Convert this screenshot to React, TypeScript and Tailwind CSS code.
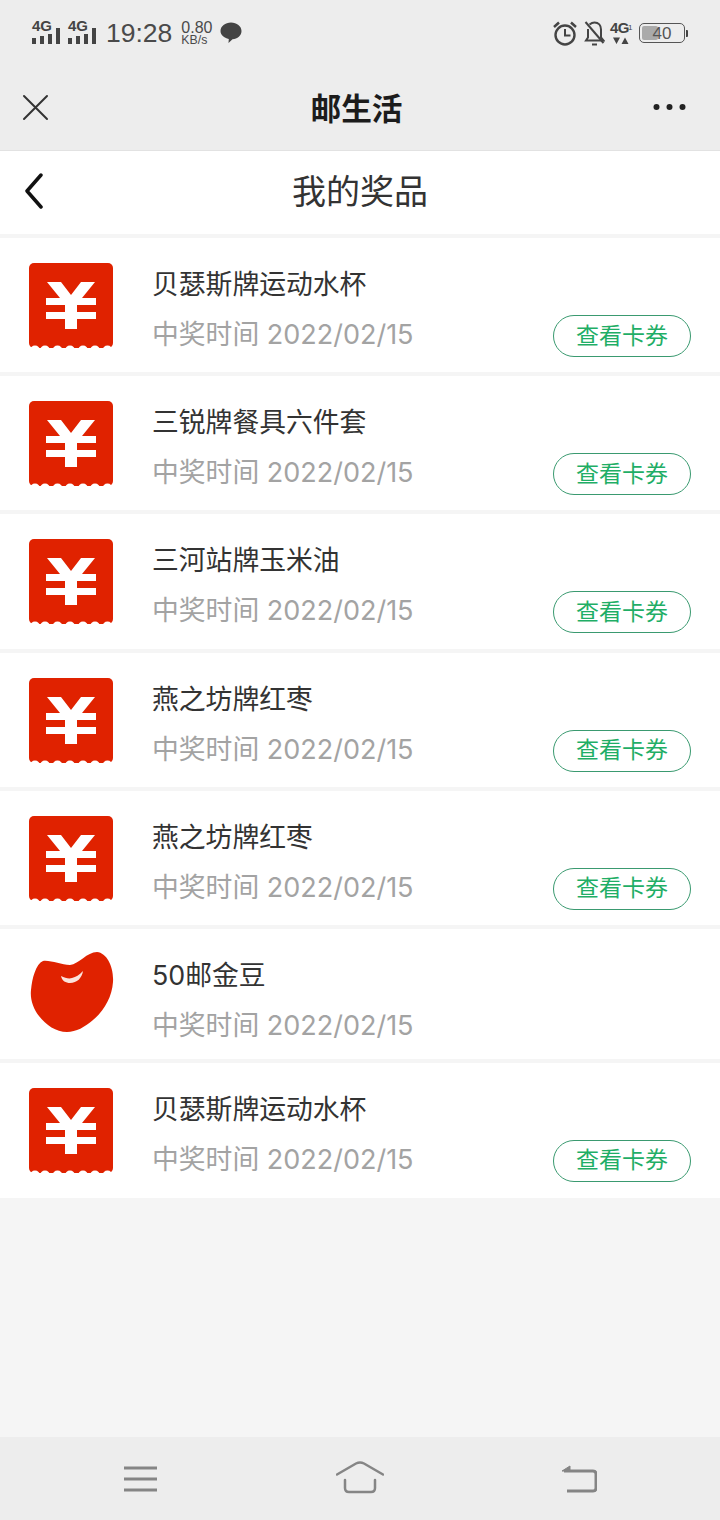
const CJK = "font-['Inter','Noto_Sans_CJK_SC',sans-serif]";

interface Prize {
  name: string;
  icon: 'ticket' | 'bean';
  hasButton: boolean;
  height: string;
}

const PRIZES: Prize[] = [
  { name: '贝瑟斯牌运动水杯', icon: 'ticket', hasButton: true, height: 'h-[134.2px]' },
  { name: '三锐牌餐具六件套', icon: 'ticket', hasButton: true, height: 'h-[134.2px]' },
  { name: '三河站牌玉米油', icon: 'ticket', hasButton: true, height: 'h-[134.2px]' },
  { name: '燕之坊牌红枣', icon: 'ticket', hasButton: true, height: 'h-[134.2px]' },
  { name: '燕之坊牌红枣', icon: 'ticket', hasButton: true, height: 'h-[134.2px]' },
  { name: '50邮金豆', icon: 'bean', hasButton: false, height: 'h-[130px]' },
  { name: '贝瑟斯牌运动水杯', icon: 'ticket', hasButton: true, height: 'h-[135px]' },
];

const SCALLOPS = [6, 16, 28.500, 41, 54, 66, 78.500];

function Signal() {
  return (
    <div className="relative w-[29px] h-[28px]">
      <span className="absolute left-0 top-[1px] text-[15px] leading-[14px] font-bold text-[#444] font-['Liberation_Sans',sans-serif]">4G</span>
      <svg width="29" height="28" viewBox="0 0 29 28" className="absolute left-0 top-0">
        <rect x="0" y="20" width="4" height="6" fill="#444" />
        <rect x="8" y="18" width="4" height="8" fill="#444" />
        <rect x="16" y="16" width="4" height="10" fill="#444" />
        <rect x="24" y="10" width="4" height="16" fill="#444" />
      </svg>
    </div>
  );
}

function StatusBar() {
  return (
    <div className="h-[70px] bg-[#ededed] flex items-start justify-between pl-[32px] pr-[32px] pt-[17px] text-[#444]">
      <div className="flex items-center h-[30px]">
        <div className="flex gap-[7px]">
          <Signal />
          <Signal />
        </div>
        <span className="ml-[9px] text-[26.500px] leading-[30px] mt-[2px] font-['Liberation_Sans',sans-serif] text-[#4a4a4a]">19:28</span>
        <div className="ml-[9px] mt-[2px] flex flex-col items-start text-[#4a4a4a] font-['Liberation_Sans',sans-serif]">
          <span className="text-[16px] leading-[13px]">0.80</span>
          <span className="text-[12.300px] leading-[12px]">KB/s</span>
        </div>
        <svg width="22" height="22" viewBox="0 0 22 22" className="ml-[8px] mt-[2px]">
          <path d="M11 .5c5.700 0 10.500 3.600 10.500 8.500 0 4.500-4 8-9 8.300l-4 3.700.3-4C4 15.800.5 12.900.5 9 .5 4.100 5.300.5 11 .5z" fill="#444" />
        </svg>
      </div>
      <div className="flex items-center h-[30px]">
        <svg width="24" height="25" viewBox="0 0 24 25" fill="none" stroke="#444" strokeWidth="2.400" className="mt-[2px]">
          <circle cx="12" cy="14" r="9.500" />
          <path d="M12 8v6.500h5.500" strokeWidth="2" />
          <path d="M1 6 6 1.500M23 6 18 1.500" strokeWidth="2.500" />
        </svg>
        <svg width="21" height="25" viewBox="0 0 21 25" fill="none" stroke="#444" strokeWidth="2" className="ml-[7px] mt-[3px]">
          <path d="M5.500 3.500Q8 1.500 10.500 1.500c4 0 6.500 3 6.500 7v8l2.500 3H2l2-3V8" />
          <path d="M1.500 1 19.500 22" />
          <path d="M8 23.500h5" />
        </svg>
        <div className="relative w-[21px] h-[26px] ml-[5px]">
          <span className="absolute left-0 top-0 text-[15px] leading-[17px] font-bold tracking-[-0.5px] font-['Liberation_Sans',sans-serif]">4G</span>
          <span className="absolute left-[18px] top-[5px] text-[8px] leading-[8px] font-['Liberation_Sans',sans-serif]">1</span>
          <svg width="16" height="8" viewBox="0 0 16 8" className="absolute left-[3px] top-[18px]">
            <path d="M0 .5h7L3.500 7zM8.500 7h7L12 .5z" fill="#444" />
          </svg>
        </div>
        <div className="ml-[8px] mt-[2px] w-[46px] h-[20px] rounded-[5px] border border-[#555] relative p-[2px]">
          <div className="w-[16px] h-full bg-[#aaa] rounded-[2px]" />
          <span className="absolute inset-0 flex items-center justify-center text-[17px] leading-none text-[#555] font-['Liberation_Sans',sans-serif]">40</span>
        </div>
        <div className="ml-[1px] mt-[2px] w-[2px] h-[7px] bg-[#444] rounded-r-[1px]" />
      </div>
    </div>
  );
}

function TitleBar() {
  return (
    <div className={`h-[81px] bg-[#ededed] border-b border-[#e2e2e2] flex items-center justify-between pl-[22px] pr-[34px] ${CJK}`}>
      <svg width="27" height="27" viewBox="0 0 27 27" fill="none" stroke="#333" strokeWidth="2" strokeLinecap="round" className="mt-[-6px]">
        <path d="M2 2l23 23M25 2 2 25" />
      </svg>
      <span className="text-[30.700px] leading-[36px] font-bold text-[#1c1c1c] ml-[11px] mt-[-2px]">邮生活</span>
      <svg width="33" height="8" viewBox="0 0 33 8" className="mt-[-6px]">
        <circle cx="3.500" cy="4" r="3" fill="#222" />
        <circle cx="16.500" cy="4" r="3" fill="#222" />
        <circle cx="29.500" cy="4" r="3" fill="#222" />
      </svg>
    </div>
  );
}

function NavBar() {
  return (
    <div className={`relative h-[83px] bg-white flex items-center justify-center ${CJK}`}>
      <svg width="20" height="36" viewBox="0 0 20 36" fill="none" stroke="#111" strokeWidth="3.500" strokeLinecap="round" strokeLinejoin="round" className="absolute left-[24px] top-[22px]">
        <path d="M17 2 3 18l14 16" />
      </svg>
      <span className="text-[34px] leading-[40px] text-[#333] mt-[-2px]">我的奖品</span>
    </div>
  );
}

function TicketIcon() {
  return (
    <svg width="84" height="86" viewBox="0 0 84 86">
      <rect x="0" y="0" width="84" height="85" rx="5" fill="#e02200" />
      {SCALLOPS.map((cx) => (
        <circle key={cx} cx={cx} cy="87.500" r="5" fill="#fff" />
      ))}
      <path d="M18 19h14l10 13 10-13h14L53 35h14v7H48v7h19v7H48v10H36V56H17v-7h19v-7H17v-7h14z" fill="#fff" />
    </svg>
  );
}

function BeanIcon() {
  return (
    <svg width="86" height="82" viewBox="0 0 86 82">
      <path
        d="M14 10C22 9 32 14 41 14 50 13 58 1 68 1 78 2 85 16 84 31 83 46 75 60 64 69 56 76 47 81 38 81 27 81 17 74 10 65 4 57 1 48 2 39 3 27 7 13 14 10Z"
        fill="#e02200"
      />
      <path d="M32 25C36 27 40 28 43 27 47 26 50 24 54 20 53 27 48 32 41 32 37 32 33 30 32 25Z" fill="#fbe4dc" />
    </svg>
  );
}

function PrizeRow({ prize }: { prize: Prize }) {
  return (
    <div className={`relative bg-white ${prize.height} flex items-start pl-[29px]`}>
      {prize.icon === 'ticket' ? (
        <div className="mt-[25px] w-[84px] shrink-0"><TicketIcon /></div>
      ) : (
        <div className="mt-[22px] w-[84px] shrink-0"><BeanIcon /></div>
      )}
      <div className="ml-[39px] pt-[29px]">
        <div className="text-[26.800px] leading-[34px] text-[#333]">{prize.name}</div>
        <div className="mt-[16px] text-[26.800px] leading-[34px] text-[#a3a3a3]">
          中奖时间 <span className="text-[27px]">2022/02/15</span>
        </div>
      </div>
      {prize.hasButton && (
        <button className="absolute right-[29px] top-[77px] w-[138px] h-[42px] rounded-full border border-[#3a9a70] text-[23px] leading-none text-[#1fae66] flex items-center justify-center bg-white">
          查看卡券
        </button>
      )}
    </div>
  );
}

function BottomBar() {
  return (
    <div className="h-[83px] bg-[#ededed] flex items-start pt-[23px] pl-[124px] pr-[123px] justify-between">
      <svg width="34" height="30" viewBox="0 0 34 30" fill="none" stroke="#858585" strokeWidth="3" className="mt-[3px]">
        <path d="M0 5h33M0 16h33M0 27h33" />
      </svg>
      <svg width="48" height="34" viewBox="0 0 48 34" fill="none" stroke="#858585" strokeWidth="2.500" strokeLinecap="round" strokeLinejoin="round">
        <path d="M1 14.500 20 3.500q4-2 8 0l19 11" />
        <path d="M9 20v8q0 4 4 4h22q4 0 4-4v-8" />
      </svg>
      <svg width="36" height="30" viewBox="0 0 36 30" fill="none" stroke="#858585" strokeWidth="3" strokeLinejoin="round" className="mt-[3px]">
        <path d="M3 8h29q3 0 3 3v14q0 3-3 3H6" />
        <path d="M1 8 9 3v5z" fill="#858585" strokeWidth="1" />
      </svg>
    </div>
  );
}

export default function App() {
  return (
    <div className={`w-[720px] h-[1520px] flex flex-col bg-[#f5f5f5] overflow-hidden ${CJK}`}>
      <StatusBar />
      <TitleBar />
      <NavBar />
      <div className="flex-1 flex flex-col gap-[4px] pt-[4px]">
        {PRIZES.map((prize, i) => (
          <PrizeRow key={i} prize={prize} />
        ))}
      </div>
      <BottomBar />
    </div>
  );
}
